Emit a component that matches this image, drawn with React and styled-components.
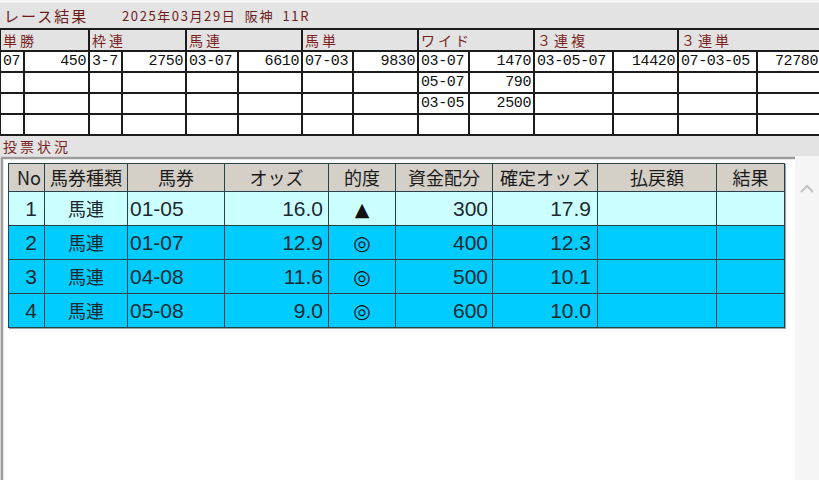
import React from "react";
import styled, { createGlobalStyle } from "styled-components";

const GlobalStyle = createGlobalStyle`
  html, body {
    margin: 0;
    padding: 0;
    background: #ffffff;
  }
  body {
    font-family: "Noto Sans CJK JP", "Liberation Sans", sans-serif;
  }
`;

const Screen = styled.div`
  width: 819px;
  height: 480px;
  overflow: hidden;
  display: flex;
  flex-direction: column;
  background: #e3e3e3;
`;

const TitleBar = styled.div`
  height: 25px;
  border-top: 3px solid #f4f4f4;
  display: flex;
  align-items: center;
  padding-left: 4px;
  color: #6e1c1c;
`;

const Title = styled.span`
  font-size: 15px;
  letter-spacing: 2px;
  width: 118px;
`;

const RaceInfo = styled.span`
  font-size: 13px;
  letter-spacing: 1.6px;
  word-spacing: 4px;
`;

const ResultWrap = styled.div`
  overflow: hidden;
`;

const ResultTable = styled.table`
  border-collapse: collapse;
  table-layout: fixed;
  width: 821px;
  margin-left: -1px;

  th,
  td {
    border: 2px solid #1c1c1c;
    padding: 0 2px;
    overflow: hidden;
    white-space: nowrap;
  }
`;

const GroupHead = styled.th`
  height: 20px;
  background: #e3e3e3;
  color: #7a1f1f;
  font-weight: normal;
  font-size: 14px;
  letter-spacing: 3px;
  text-align: left;
  line-height: 20px;
`;

const DataCell = styled.td`
  height: 19px;
  background: #ffffff;
  font-family: "Liberation Mono", monospace;
  font-size: 15px;
  letter-spacing: -0.4px;
  line-height: 19px;
  color: #111;
  text-align: ${(p) => (p.$num ? "right" : "left")};
`;

const SectionLabel = styled.div`
  height: 20px;
  display: flex;
  align-items: center;
  padding-left: 3px;
  color: #7a1f1f;
  font-size: 14px;
  letter-spacing: 3px;
`;

const Panel = styled.div`
  flex: 1;
  display: flex;
  min-height: 0;
`;

const Frame = styled.div`
  flex: 1;
  background: #ffffff;
  border-top: 1px solid #d8d8d8;
  border-left: 1px solid #d8d8d8;
  box-shadow: inset 2px 2px 0 #9c9c9c, inset 3px 3px 0 #e6e6e6;
  padding: 6px 0 0 7px;
`;

const Scrollbar = styled.div`
  width: 24px;
  background: #f5f5f5;
  display: flex;
  justify-content: center;
  padding-top: 28px;
`;

const Grid = styled.table`
  border-collapse: collapse;
  table-layout: fixed;
  width: 776px;
  box-shadow: 1px 1px 0 #9aa4a8;

  th,
  td {
    border: 1px solid #26404c;
    padding: 0;
    white-space: nowrap;
    overflow: hidden;
  }
`;

const HeadCell = styled.th`
  height: 27px;
  background: #d4d0c8;
  color: #1a1a1a;
  font-weight: normal;
  font-size: 18px;
  line-height: 27px;
  text-align: ${(p) => p.$align || "center"};
  padding-right: ${(p) => (p.$align === "right" ? "3px" : "0")} !important;
`;

const Cell = styled.td`
  height: 33px;
  background: ${(p) => (p.$light ? "#ccffff" : "#00ccff")};
  color: #1a2a30;
  font-family: "Liberation Sans", "Noto Sans CJK JP", sans-serif;
  font-size: 21px;
  line-height: 30px;
  text-align: ${(p) => p.$align || "left"};
  padding-left: ${(p) => (p.$align === "left" ? "2px" : "0")} !important;
  padding-right: ${(p) => p.$pr || "0"} !important;
`;

const Kanji = styled.span`
  font-family: "Noto Sans CJK JP", sans-serif;
  font-size: 18px;
  line-height: 1;
`;

const Mark = styled.span`
  font-family: "DejaVu Sans", "Noto Sans CJK JP", sans-serif;
  font-size: ${(p) => p.$size}px;
  line-height: 1;
  color: #111;
`;

const resultCols = [24, 65, 33, 64, 52, 64, 51, 65, 51, 65, 79, 65, 79, 64];
const groups = ["単勝", "枠連", "馬連", "馬単", "ワイド", "３連複", "３連単"];
const resultRows = [
  ["07", "450", "3-7", "2750", "03-07", "6610", "07-03", "9830", "03-07", "1470", "03-05-07", "14420", "07-03-05", "72780"],
  ["", "", "", "", "", "", "", "", "05-07", "790", "", "", "", ""],
  ["", "", "", "", "", "", "", "", "03-05", "2500", "", "", "", ""],
  ["", "", "", "", "", "", "", "", "", "", "", "", "", ""],
];

const gridCols = [36, 83, 97, 104, 67, 97, 105, 119, 68];
const bets = [
  { no: 1, type: "馬連", ticket: "01-05", odds: "16.0", mark: "▲", fund: "300", fixed: "17.9" },
  { no: 2, type: "馬連", ticket: "01-07", odds: "12.9", mark: "◎", fund: "400", fixed: "12.3" },
  { no: 3, type: "馬連", ticket: "04-08", odds: "11.6", mark: "◎", fund: "500", fixed: "10.1" },
  { no: 4, type: "馬連", ticket: "05-08", odds: "9.0", mark: "◎", fund: "600", fixed: "10.0" },
];

export default function App() {
  return (
    <Screen>
      <GlobalStyle />
      <TitleBar>
        <Title>レース結果</Title>
        <RaceInfo>2025年03月29日 阪神 11R</RaceInfo>
      </TitleBar>

      <ResultWrap>
        <ResultTable>
          <colgroup>
            {resultCols.map((w, i) => (
              <col key={i} style={{ width: w }} />
            ))}
          </colgroup>
          <thead>
            <tr>
              {groups.map((g) => (
                <GroupHead key={g} colSpan={2}>
                  {g}
                </GroupHead>
              ))}
            </tr>
          </thead>
          <tbody>
            {resultRows.map((row, r) => (
              <tr key={r}>
                {row.map((v, i) => (
                  <DataCell key={i} $num={i % 2 === 1}>
                    {v}
                  </DataCell>
                ))}
              </tr>
            ))}
          </tbody>
        </ResultTable>
      </ResultWrap>

      <SectionLabel>投票状況</SectionLabel>

      <Panel>
        <Frame>
          <Grid>
            <colgroup>
              {gridCols.map((w, i) => (
                <col key={i} style={{ width: w }} />
              ))}
            </colgroup>
            <thead>
              <tr>
                <HeadCell $align="right">No</HeadCell>
                <HeadCell>馬券種類</HeadCell>
                <HeadCell>馬券</HeadCell>
                <HeadCell>オッズ</HeadCell>
                <HeadCell>的度</HeadCell>
                <HeadCell>資金配分</HeadCell>
                <HeadCell>確定オッズ</HeadCell>
                <HeadCell>払戻額</HeadCell>
                <HeadCell>結果</HeadCell>
              </tr>
            </thead>
            <tbody>
              {bets.map((b, i) => {
                const light = i === 0;
                return (
                  <tr key={b.no}>
                    <Cell $light={light} $align="right" $pr="7px">
                      {b.no}
                    </Cell>
                    <Cell $light={light} $align="center">
                      <Kanji>{b.type}</Kanji>
                    </Cell>
                    <Cell $light={light} $align="left">
                      {b.ticket}
                    </Cell>
                    <Cell $light={light} $align="right" $pr="5px">
                      {b.odds}
                    </Cell>
                    <Cell $light={light} $align="center">
                      <Mark $size={b.mark === "▲" ? 19 : 20}>{b.mark}</Mark>
                    </Cell>
                    <Cell $light={light} $align="right" $pr="4px">
                      {b.fund}
                    </Cell>
                    <Cell $light={light} $align="right" $pr="6px">
                      {b.fixed}
                    </Cell>
                    <Cell $light={light} />
                    <Cell $light={light} />
                  </tr>
                );
              })}
            </tbody>
          </Grid>
        </Frame>
        <Scrollbar>
          <svg width="14" height="10" viewBox="0 0 14 10">
            <polyline points="1,8 7,2 13,8" fill="none" stroke="#c4c4c4" strokeWidth="2" />
          </svg>
        </Scrollbar>
      </Panel>
    </Screen>
  );
}
